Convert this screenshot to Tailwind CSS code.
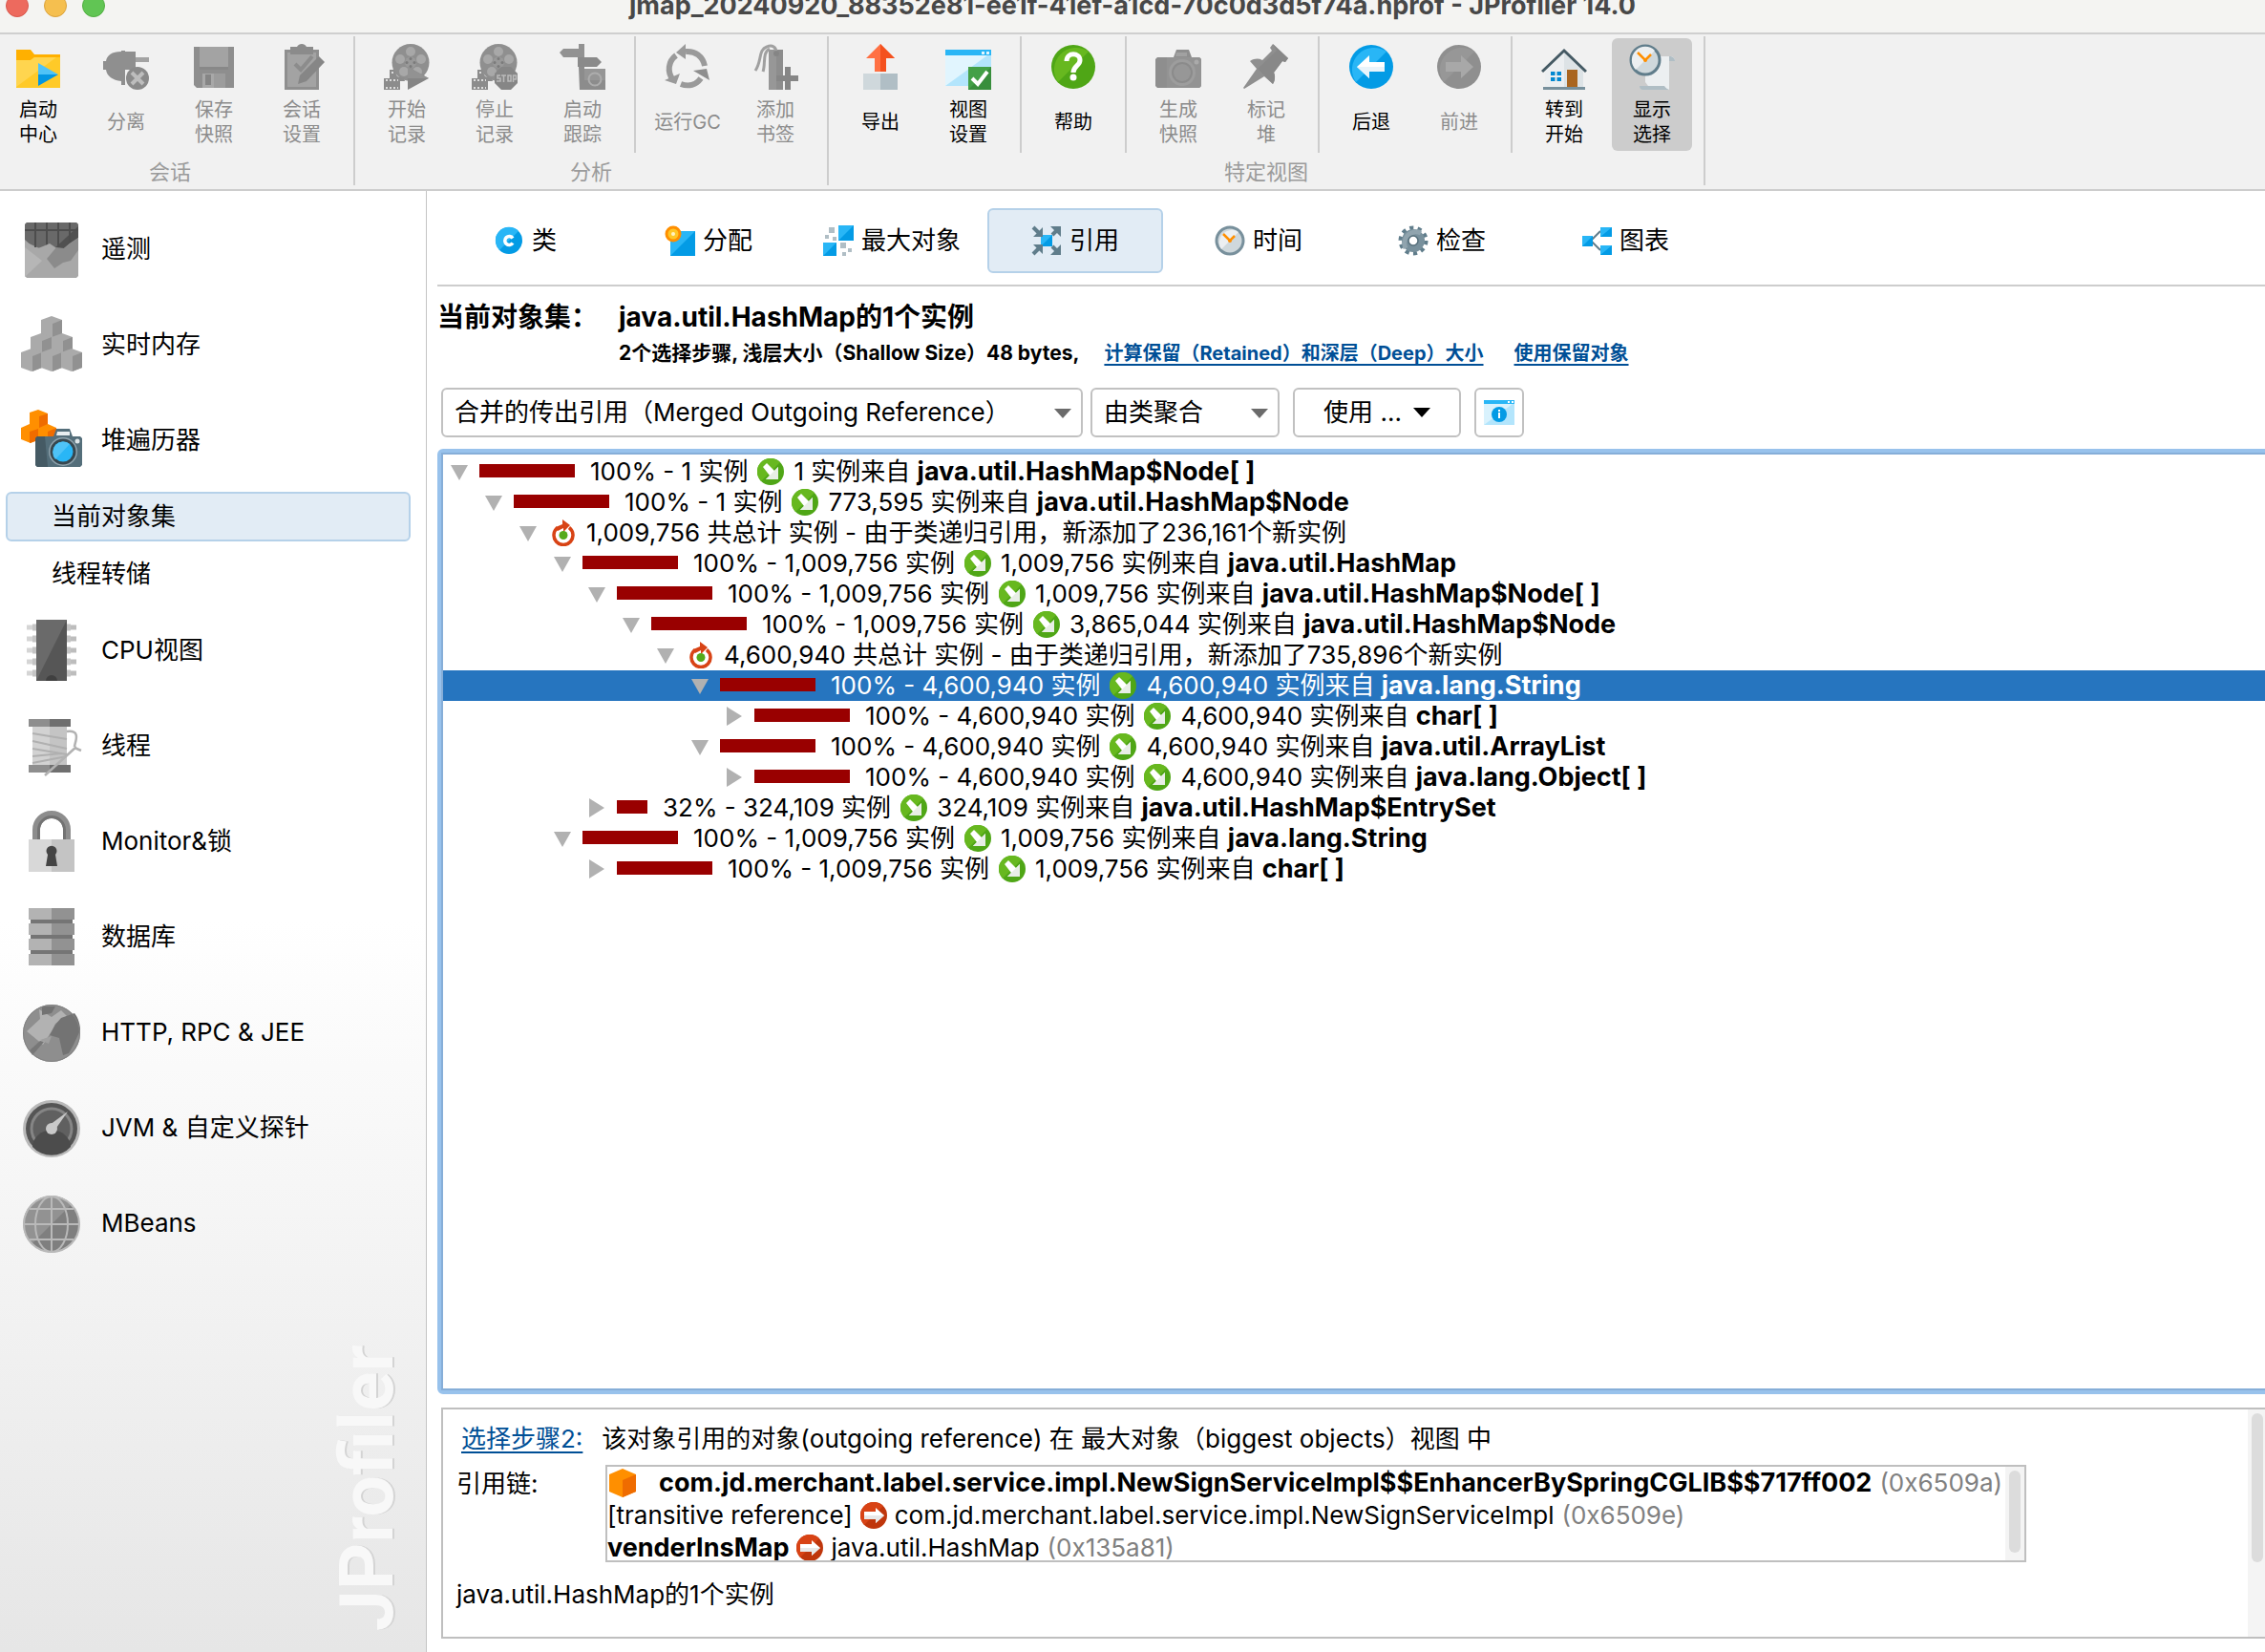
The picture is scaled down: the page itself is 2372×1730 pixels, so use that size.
<!DOCTYPE html>
<html lang="zh-CN">
<head>
<meta charset="utf-8">
<meta name="viewport" content="width=device-width, initial-scale=1">
<title>JProfiler 14.0</title>
<script src="https://cdn.jsdelivr.net/npm/@tailwindcss/browser@4"></script>
</head>
<body class="flex h-screen flex-col overflow-hidden bg-white font-['Inter','Noto_Sans_CJK_SC',sans-serif] text-[26px] leading-8 text-black">

<!-- icon library -->
<svg class="hidden" aria-hidden="true">
  <symbol id="i-start" viewBox="0 0 48 48"><path d="M1 6h15l4 5h27v7H1z" fill="#ffb000"/><path d="M1 17h15l4-3h27v32H1z" fill="#ffca28"/><path d="M1 17h15l4-3h23L1 45z" fill="#ffd54f"/><path d="M24 20l21 12H24z" fill="#4fc3f7"/><path d="M24 44l21-12H24z" fill="#0396e2"/></symbol>
  <symbol id="i-detach" viewBox="0 0 48 48"><path d="M0 18h3c1-6 6-10 16-10V7h4v1h11v6h14v5H34v8H23v16h-4v-4C10 38 4 34 3 27H0z" fill="#8f8f8f"/><path d="M34 14h14v5H34z" fill="#a3a3a3"/><circle cx="36" cy="36" r="12" fill="#8a8a8a"/><path d="M30 30l12 12M42 30L30 42" stroke="#bdbdbd" stroke-width="4"/></symbol>
  <symbol id="i-save" viewBox="0 0 48 48"><path d="M3 3h42v43H6l-3-3z" fill="#8e8e8e"/><path d="M9 3h30v21H9z" fill="#a3a3a3"/><path d="M9 24h30v3H9z" fill="#888"/><path d="M12 31h24v15H12z" fill="#a8a8a8"/><path d="M15 32h6v11h-6z" fill="#858585"/><path d="M24 31h12v15H24z" fill="#9c9c9c"/></symbol>
  <symbol id="i-session" viewBox="0 0 48 48"><path d="M6 6h36v42H6z" fill="#8f8f8f"/><path d="M9 9h30v36H9z" fill="#a3a3a3"/><path d="M12 3h7c2-4 8-4 10 0h7v8H12z" fill="#8b8b8b"/><path d="M17 21l6 6 12-14" fill="none" stroke="#8c8c8c" stroke-width="4"/><path d="M20 42l2-9 20-20 6 6-19 20z" fill="#868686"/></symbol>
  <symbol id="i-reel" viewBox="0 0 48 48"><circle cx="28" cy="19.500" r="19.500" fill="#8f8f8f"/><g fill="#a8a8a8"><circle cx="28" cy="8" r="5"/><circle cx="39" cy="16" r="5"/><circle cx="35" cy="29" r="5"/><circle cx="21" cy="29" r="5"/><circle cx="17" cy="16" r="5"/></g><circle cx="28" cy="19.500" r="6" fill="#999"/><g fill="#7b7b7b"><circle cx="28" cy="15.500" r="1.500"/><circle cx="28" cy="23.500" r="1.500"/><circle cx="24" cy="19.500" r="1.500"/><circle cx="32" cy="19.500" r="1.500"/></g><path d="M0 36h6v-9h5l3 7 7 2 1 3h-5v9H0z" fill="#8c8c8c"/><path d="M2 38h13M2 46h13M8 30h4" stroke="#ddd" stroke-width="2" stroke-dasharray="2 2"/></symbol>
  <symbol id="i-record" viewBox="0 0 48 48"><use href="#i-reel"/><path d="M25 24l22 12-22 12z" fill="#858585"/><path d="M25 24l22 12H25z" fill="#929292"/></symbol>
  <symbol id="i-stop" viewBox="0 0 48 48"><use href="#i-reel"/><path d="M31 24h10l7 7v10l-7 7H31l-7-7V31z" fill="#868686"/><g fill="none" stroke="#bbb" stroke-width="1.500"><path d="M30 33h-3v3h3v3h-4M31 33h5M33.500 33v7M41 33h-3v6h3zM43.500 40v-7h3v4h-3"/></g></symbol>
  <symbol id="i-trace" viewBox="0 0 48 48"><path d="M0 9l4-4h16V0h6v14H4z" fill="#929292"/><path d="M19 14h20l5 5-5 5H19z" fill="#8a8a8a"/><path d="M20 24h6v2h22v22H21z" fill="#8c8c8c"/><path d="M26 26h22v12H26z" fill="#969696"/><circle cx="37" cy="37" r="6.500" fill="none" stroke="#adadad" stroke-width="2"/></symbol>
  <symbol id="i-gc" viewBox="0 0 48 48"><g fill="none" stroke="#9a9a9a" stroke-width="6"><path d="M22 8c10-1 18 5 20 15"/><path d="M9 38C2 29 4 18 12 12"/><path d="M38 36c-5 7-13 9-21 6"/></g><path d="M22 0v16l-10-7z" fill="#9a9a9a"/><path d="M0 38l16-7-4 11z" fill="#9a9a9a"/><path d="M30 28l14-2 3 12z" fill="#8e8e8e"/></symbol>
  <symbol id="i-bookmark" viewBox="0 0 48 48"><path d="M17 6h15v42H17z" fill="#979797"/><path d="M25 6h7v42h-7z" fill="#8d8d8d"/><path d="M3 28C10 18 6 6 15 3c6-3 10 1 10 6M11 29c3-8-1-20 7-24" fill="none" stroke="#a0a0a0" stroke-width="3"/><circle cx="25" cy="10" r="3" fill="#858585"/><path d="M34 24h6v9h8v6h-8v9h-6v-9h-9v-6h9z" fill="#868686"/></symbol>
  <symbol id="i-export" viewBox="0 0 48 48"><path d="M24 0l15 15h-9v14H18V15H9z" fill="#ff7043"/><path d="M24 0l15 15h-9v14h-6z" fill="#f4511e"/><path d="M6 31h18v17H6z" fill="#cfd8dc"/><path d="M24 31h18v17H24z" fill="#b0bec5"/></symbol>
  <symbol id="i-view" viewBox="0 0 48 48"><path d="M0 6h48v6H0z" fill="#29b6f6"/><path d="M0 12h48v32H0z" fill="#b3e5fc"/><path d="M0 12h44L0 44z" fill="#e1f5fe"/><path d="M38 8h3v3h-3zM43 8h3v3h-3z" fill="#e1f5fe"/><path d="M24 24h24v24H24z" fill="#388e3c"/><path d="M24 24h24L24 48z" fill="#43a047"/><path d="M28 36l6 6 10-13" fill="none" stroke="#fff" stroke-width="4"/></symbol>
  <symbol id="i-help" viewBox="0 0 48 48"><circle cx="24" cy="24" r="23" fill="#4fa616"/><path d="M8 40A23 23 0 0 1 40 8z" fill="#67b81f"/><path d="M17 18c0-10 14-9 14-1 0 6-7 6-7 13" fill="none" stroke="#fff" stroke-width="5"/><circle cx="24" cy="35" r="3.500" fill="#fff"/></symbol>
  <symbol id="i-camera" viewBox="0 0 48 48"><path d="M2 14h17l3-8h13l3 8h8l2 2v28l-2 2H2l-2-2V16z" fill="#8e8e8e"/><path d="M12 14h34l2 2v28l-2 2H12z" fill="#939393"/><path d="M22 9h11v4H21z" fill="#a1a1a1"/><circle cx="28" cy="30" r="14" fill="#9d9d9d"/><circle cx="28" cy="30" r="11" fill="#8b8b8b"/><circle cx="28" cy="30" r="9" fill="#979797"/><circle cx="43" cy="19" r="2.500" fill="#aaa"/></symbol>
  <symbol id="i-pin" viewBox="0 0 48 48"><path d="M31 0l16 15-3 4-3-1-9 12c2 4 1 9-1 12l-9-8L1 47 0 46l14-20-7-8c5-3 9-3 13-1l10-10-2-3z" fill="#8f8f8f"/><path d="M31 0l16 15-3 4-3-1-9 12c2 4 1 9-1 12L15 26 35 7z" fill="#888"/></symbol>
  <symbol id="i-back" viewBox="0 0 48 48"><circle cx="24" cy="24" r="23" fill="#039be5"/><path d="M8 40A23 23 0 0 1 40 8z" fill="#29b6f6"/><path d="M9 24l13-12v7h16v10H22v7z" fill="#fff"/><path d="M22 24h16v5H22v7L9 24z" fill="#e9f4fb"/></symbol>
  <symbol id="i-forward" viewBox="0 0 48 48"><circle cx="24" cy="24" r="23" fill="#8f8f8f"/><path d="M8 40A23 23 0 0 1 40 8z" fill="#979797"/><path d="M39 24L26 12v7H10v10h16v7z" fill="#a8a8a8"/></symbol>
  <symbol id="i-home" viewBox="0 0 48 48"><path d="M4 28L24 8l20 20v18H4z" fill="#eceff1"/><path d="M24 8l20 20v18H24z" fill="#dde3e6"/><path d="M1 29L24 7l23 22" fill="none" stroke="#455a64" stroke-width="3"/><path d="M2 45h44v3H2z" fill="#78909c"/><path d="M27 27h11v18H27z" fill="#a9651f"/><path d="M10 29h11v10H10z" fill="#0288d1"/><path d="M15.500 28v12M9 34h13" stroke="#eee" stroke-width="2"/></symbol>
  <symbol id="i-showsel" viewBox="0 0 48 48"><path d="M17 13h26c3 0 5 2 5 5h-6v30H23l-6-8z" fill="#eceff1"/><path d="M42 13c4 0 6 2 6 5h-6zM11 44h26c1 2 3 3 5 4H15c-3 0-4-2-4-4z" fill="#b0bec5"/><circle cx="17" cy="17" r="15" fill="#cfd8dc" stroke="#607d8b" stroke-width="3"/><path d="M7 27A14 14 0 0 1 27 7z" fill="#eceff1"/><path d="M9 9l8 8 6-6" fill="none" stroke="#ff8f00" stroke-width="2.500"/><circle cx="17" cy="17" r="2" fill="#ff8f00"/></symbol>

  <symbol id="s-telemetry" viewBox="0 0 64 64"><path d="M4 6l2-2h52l2 2v54l-2 2H6l-2-2z" fill="#a8a8a8"/><path d="M4 6l2-2h52l2 2v18L30 36 4 24z" fill="#696969"/><path d="M60 8v24H34z" fill="#505050"/><path d="M4 12h56M15 4v26M27 4v26M39 4v26M51 4v26" stroke="#4d4d4d" stroke-width="2"/><path d="M4 22l11 10 8-3 7-3 9 6 6-1 6-5 9-6v40L4 60z" fill="#a8a8a8"/><path d="M27 42l10-12 8 1 6-5 9-6v13l-8 11-8 2-9 6z" fill="#8b8b8b"/><path d="M4 30l18 14L4 61z" fill="#b6b6b6"/></symbol>
  <symbol id="s-cube" viewBox="0 0 22 24"><path d="M0 4l11-4 11 4v16l-11 4-11-4z" fill="#aaa"/><path d="M12 8l10-4v16l-10 4z" fill="#919191"/></symbol>
  <symbol id="s-memory" viewBox="0 0 64 64"><use href="#s-cube" x="21" y="2" width="22" height="24"/><use href="#s-cube" x="10" y="20" width="22" height="24"/><use href="#s-cube" x="32" y="20" width="22" height="24"/><use href="#s-cube" x="0" y="36" width="22" height="24"/><use href="#s-cube" x="21" y="36" width="22" height="24"/><use href="#s-cube" x="42" y="36" width="22" height="24"/></symbol>
  <symbol id="s-heap" viewBox="0 0 64 64"><path d="M9 3l9-3 10 4v11l9 4v12l-9 3-9-3-9 4-10-4V19l9-4z" fill="#ff8f00"/><path d="M19 7l9-3v11l-9 4zM9 23l9-3v12l-9 3zM28 23l9-4v12l-9 3z" fill="#ef6c00"/><path d="M17 28h17l3-8h14l3 8h8l2 2v28l-2 2H17l-2-2V30z" fill="#546e7a"/><path d="M15 30l2-2h8l3 32H17l-2-2z" fill="#455a64"/><path d="M38 23h13v4H37z" fill="#e8eef0"/><circle cx="44" cy="44" r="15" fill="#90a4ae"/><circle cx="44" cy="44" r="13.500" fill="#37474f"/><circle cx="44" cy="44" r="10.500" fill="#29b6f6"/><path d="M36 52a11 11 0 0 1 15-16z" fill="#4fc3f7"/><circle cx="59" cy="33" r="2.500" fill="#dfe6e9"/></symbol>
  <symbol id="s-cpu" viewBox="0 0 64 64"><path d="M6 8h8M6 20h8M6 32h8M6 44h8M6 56h8" stroke="#d5d5d5" stroke-width="5"/><path d="M50 8h8M50 20h8M50 32h8M50 44h8M50 56h8" stroke="#bdbdbd" stroke-width="5"/><path d="M12 8h40M12 20h40M12 32h40M12 44h40M12 56h40" stroke="#c4c4c4" stroke-width="7"/><path d="M16 0h32v64H16z" fill="#565656"/><path d="M16 0h32L18 60l-2 4z" fill="#6a6a6a"/><path d="M26 64a6 6 0 0 1 12 0z" fill="#404040"/></symbol>
  <symbol id="s-thread" viewBox="0 0 64 64"><path d="M12 11h36v42H12z" fill="#c4c4c4"/><path d="M12 11h18v42H12z" fill="#d2d2d2"/><path d="M12 19l36 6M12 27l36 8M12 35l36 6M12 50l36-7M12 43l30-3" stroke="#b0b0b0" stroke-width="2"/><path d="M8 4h44v8H8zM8 52h44v8H8z" fill="#8e8e8e"/><path d="M30 4h22v8H30zM30 52h22v8H30z" fill="#6f6f6f"/><path d="M48 17c16-2 8 12 8 16M25 63l33-30M56 34l7 3" fill="none" stroke="#b2b2b2" stroke-width="2.500"/></symbol>
  <symbol id="s-lock" viewBox="0 0 64 64"><path d="M16 32V20a16 16 0 0 1 32 0v12" fill="none" stroke="#8d8d8d" stroke-width="8"/><path d="M18.500 32V20a13.500 13.500 0 0 1 27 0v12" fill="none" stroke="#737373" stroke-width="3"/><path d="M8 30h48v34H8z" fill="#c4c4c4"/><path d="M8 30h24v34H8z" fill="#d8d8d8"/><path d="M28 46a5.500 5.500 0 1 1 8 0l2 12H26z" fill="#454545"/></symbol>
  <symbol id="s-db" viewBox="0 0 64 64"><path d="M10 4h44v58H10z" fill="#757575"/><g fill="#b3b3b3"><path d="M8 2h24v12H8zM8 18h24v12H8zM8 34h24v12H8zM8 50h24v12H8z"/></g><g fill="#929292"><path d="M32 2h24v12H32zM32 18h24v12H32zM32 34h24v12H32zM32 50h24v12H32z"/></g></symbol>
  <symbol id="s-globe" viewBox="0 0 64 64"><circle cx="32" cy="33" r="30" fill="#8e8e8e"/><path d="M6 31l14-13-1-10 13 8 10-7 6 6-12 8-4 8-9 14z" fill="#b2b2b2"/><path d="M22 5l14 0-4 7-10 2zM36 24l6-7 14-5c4 5 6 12 6 18l-7 15-5 9-6 2-4-18-10-3z" fill="#737373"/><path d="M24 42l-12 14-3-5 11-10z" fill="#777"/><path d="M32 36l-3 8-9-4z" fill="#a0a0a0"/><circle cx="32" cy="33" r="29.500" fill="none" stroke="#828282"/></symbol>
  <symbol id="s-gauge" viewBox="0 0 64 64"><circle cx="32" cy="33" r="30" fill="#b9b9b9"/><circle cx="32" cy="33" r="27" fill="#555"/><circle cx="32" cy="33" r="21" fill="#606060" stroke="#858585" stroke-width="3"/><path d="M12 52a16 14 0 0 1 40 0 27 27 0 0 1-40 0z" fill="#4c4c4c"/><path d="M30 29l19-14-14 20z" fill="#c9c9c9"/><circle cx="32" cy="33" r="6" fill="#c9c9c9"/></symbol>
  <symbol id="s-mbeans" viewBox="0 0 64 64"><circle cx="32" cy="33" r="29.500" fill="#7f7f7f"/><path d="M11 54A29.500 29.500 0 0 1 53 12z" fill="#929292"/><g fill="none" stroke="#b9b9b9" stroke-width="2"><circle cx="32" cy="33" r="29"/><ellipse cx="32" cy="33" rx="17" ry="29"/><path d="M32 4v58M3 33h58M9 17h46M9 49h46"/></g></symbol>

  <symbol id="t-class" viewBox="0 0 32 32"><circle cx="16" cy="16" r="14" fill="#039be5"/><path d="M6 26A14 14 0 0 1 26 6z" fill="#29b6f6"/><path d="M20 13.500a4.500 4.500 0 1 0 0 5" fill="none" stroke="#fff" stroke-width="3.500"/></symbol>
  <symbol id="t-alloc" viewBox="0 0 32 32"><path d="M6 6h26v26H6z" fill="#039be5"/><path d="M6 6h26L6 32z" fill="#29b6f6"/><circle cx="9" cy="9" r="8.500" fill="#ff8f00"/><circle cx="9" cy="9" r="5.500" fill="#ffc727"/><circle cx="9" cy="9" r="2" fill="#fff3c4"/></symbol>
  <symbol id="t-big" viewBox="0 0 32 32"><path d="M16 0h16v16H16zM0 18h14v14H0z" fill="#039be5"/><path d="M16 0h16L16 16zM0 18h14L0 32z" fill="#29b6f6"/><path d="M6 2h6v6H6zM2 10h4v4H2zM10 12h4v4h-4zM18 18h6v6h-6zM26 24h4v4h-4zM20 28h4v4h-4z" fill="#b0bec5"/></symbol>
  <symbol id="t-refs" viewBox="0 0 32 32"><path d="M10 10h12v12H10z" fill="#039be5"/><path d="M10 10h12L10 22z" fill="#29b6f6"/><g stroke="#607d8b" stroke-width="4"><path d="M2 2l7 7M2 30l7-7M22 10l7-7M22 22l7 7"/></g><path d="M12 2v10H2zM12 30V20H2zM20 1h11v11zM20 31h11V20z" fill="#607d8b"/></symbol>
  <symbol id="t-time" viewBox="0 0 32 32"><circle cx="16" cy="16" r="14" fill="#cfd8dc" stroke="#78909c" stroke-width="3"/><path d="M7 25A13 13 0 0 1 25 7z" fill="#eceff1"/><path d="M9 9l7 7 5-5" fill="none" stroke="#ff8f00" stroke-width="2.500"/><circle cx="16" cy="16" r="2" fill="#ff8f00"/></symbol>
  <symbol id="t-gear" viewBox="0 0 32 32"><circle cx="16" cy="16" r="13" fill="none" stroke="#607d8b" stroke-width="5" stroke-dasharray="4 4.170"/><circle cx="16" cy="16" r="8.500" fill="none" stroke="#78909c" stroke-width="7"/><path d="M8 24A12 12 0 0 1 24 8" fill="none" stroke="#90a4ae" stroke-width="5"/><circle cx="16" cy="16" r="5" fill="#fff" stroke="#546e7a" stroke-width="1.500"/></symbol>
  <symbol id="t-graph" viewBox="0 0 32 32"><path d="M20 6l-10 10 10 10" fill="none" stroke="#607d8b" stroke-width="2"/><path d="M1 11h11v11H1zM20 2h12v10H20zM20 21h12v10H20z" fill="#039be5"/><path d="M1 11h11L1 22zM20 2h12L20 12zM20 21h12L20 31z" fill="#29b6f6"/></symbol>
  <symbol id="t-info" viewBox="0 0 32 26"><path d="M0 0h32v4H0z" fill="#29b6f6"/><path d="M0 4h32v22H0z" fill="#b3e5fc"/><path d="M0 4h30L0 26z" fill="#d9f2fd"/><path d="M25 1h2v2h-2zM29 1h2v2h-2z" fill="#fff"/><circle cx="16" cy="15" r="8" fill="#039be5"/><path d="M16 13v6M16 10v2" stroke="#fff" stroke-width="2"/></symbol>
  <symbol id="g-out" viewBox="0 0 28 28"><circle cx="14" cy="14" r="14" fill="#4fa616"/><path d="M4 24A14 14 0 0 1 24 4z" fill="#67b81f"/><path d="M6 9l4-4 8 8 4-4v13H9l4-4z" fill="#fff"/><path d="M22 9v13H9z" fill="#e8eee6"/></symbol>
  <symbol id="g-rec" viewBox="0 0 24 28"><path d="M6 8.500a10 10 0 1 0 12 0" fill="none" stroke="#d84315" stroke-width="3.500"/><path d="M11 0l8 6-7 7v-4l-6 3-2-4 7-3z" fill="#d84315"/><circle cx="12" cy="16.500" r="4.500" fill="#55aa1b"/></symbol>
  <symbol id="g-ref" viewBox="0 0 28 28"><circle cx="14" cy="14" r="14" fill="#bf360c"/><path d="M4 24A14 14 0 0 1 24 4z" fill="#d84315"/><path d="M25 14l-9-8v4H4v8h12v4z" fill="#fff"/><path d="M25 14H4v4h12v4z" fill="#e8e8e8"/></symbol>
  <symbol id="g-obj" viewBox="0 0 28 30"><path d="M14 0l14 6v18l-14 6L0 24V6z" fill="#ff8f00"/><path d="M14 12l14-6v18l-14 6z" fill="#ef6c00"/></symbol>
</svg>

<!-- window title bar -->
<header class="shrink-0 overflow-hidden border-b-2 border-[#cfcfcf] bg-[#f4f4f2]">
  <div class="-mt-[22px] grid h-14 grid-cols-[1fr_auto_1fr] items-center px-1.5">
    <div class="flex gap-4">
      <button aria-label="关闭" class="size-6 rounded-full border border-[#d8584d] bg-[#ed6a5e]"></button>
      <button aria-label="最小化" class="size-6 rounded-full border border-[#dba23c] bg-[#f5bf4f]"></button>
      <button aria-label="缩放" class="size-6 rounded-full border border-[#51ae41] bg-[#61c554]"></button>
    </div>
    <h1 class="text-[27px] font-bold whitespace-nowrap text-[#484848]">jmap_20240920_88352e81-ee1f-41ef-a1cd-70c0d3d5f74a.hprof - JProfiler 14.0</h1>
  </div>
</header>

<!-- toolbar -->
<div id="toolbar" role="toolbar" class="flex h-[164px] shrink-0 overflow-hidden border-b-2 border-[#cdcdcd] bg-[#f1f1f1] pt-0.5 pb-1"></div>

<div class="flex min-h-0 flex-1">
  <!-- views -->
  <aside class="flex w-[447px] shrink-0 flex-col border-r border-[#c4c4c4] bg-linear-to-b from-white from-50% to-[#e6e6e6] pt-[11px]">
    <nav id="views" class="flex flex-col"></nav>
    <div class="flex min-h-0 flex-1 items-end justify-end pr-3.5 pb-[22px]">
      <div class="rotate-180 font-['Roboto',sans-serif] text-[77px] leading-[94px] font-bold text-[#f8f8f8] [writing-mode:vertical-rl] text-shadow-[0_2px_0_#d4d4d4]">JProfiler</div>
    </div>
  </aside>

  <main class="flex min-w-0 flex-1 flex-col overflow-hidden pl-[11px]">
    <nav id="tabs" class="flex h-[100px] shrink-0 gap-2 border-b-2 border-[#cdcdcd] pt-[18px]"></nav>

    <section class="grid shrink-0 grid-cols-[190px_1fr] pt-3 font-bold">
      <h2 class="text-[28px] leading-10 whitespace-nowrap">当前对象集：</h2>
      <div>
        <p class="text-[28px] leading-10">java.util.HashMap的1个实例</p>
        <p class="flex gap-[26px] text-[20px] leading-9 whitespace-nowrap">
          <span class="text-[21px]">2个选择步骤, 浅层大小（Shallow Size）48 bytes,</span>
          <span class="flex gap-8">
            <a href="#" class="text-[#004f96] underline decoration-2 underline-offset-4">计算保留（Retained）和深层（Deep）大小</a>
            <a href="#" class="text-[#004f96] underline decoration-2 underline-offset-4">使用保留对象</a>
          </span>
        </p>
      </div>
    </section>

    <div class="flex shrink-0 gap-2 pt-[18px] pb-3 pl-1">
      <div class="relative">
        <select aria-label="引用类型" class="h-[52px] w-[672px] appearance-none rounded-md border-2 border-[#c1c1c1] bg-white pl-3"><option>合并的传出引用（Merged Outgoing Reference）</option></select>
        <svg class="pointer-events-none absolute top-[22px] right-3 h-2.5 w-[18px]" viewBox="0 0 18 10"><path d="M0 0h18l-9 10z" fill="#6b6b6b"/></svg>
      </div>
      <div class="relative">
        <select aria-label="聚合方式" class="h-[52px] w-[198px] appearance-none rounded-md border-2 border-[#c1c1c1] bg-white pl-3"><option>由类聚合</option></select>
        <svg class="pointer-events-none absolute top-[22px] right-3 h-2.5 w-[18px]" viewBox="0 0 18 10"><path d="M0 0h18l-9 10z" fill="#6b6b6b"/></svg>
      </div>
      <div class="flex gap-3.5 pl-1.5">
        <button class="flex h-[52px] w-[176px] items-center justify-center gap-3 rounded-md border-2 border-[#c1c1c1] bg-white">使用 ...<svg class="h-2.5 w-[18px]" viewBox="0 0 18 10"><path d="M0 0h18l-9 10z"/></svg></button>
        <button aria-label="信息" class="flex h-[52px] w-[52px] items-center justify-center rounded-md border-2 border-[#c1c1c1] bg-white"><svg class="h-[26px] w-8"><use href="#t-info"/></svg></button>
      </div>
    </div>

    <!-- reference tree -->
    <div class="-mr-2 flex min-h-0 flex-1 rounded-md border-4 border-[#98c2ec] bg-[#98c2ec]">
      <ul id="tree" role="tree" class="w-full overflow-hidden border-2 border-[#86aed8] bg-white pt-0.5"></ul>
    </div>

    <!-- selection steps -->
    <section class="mt-3.5 mb-3.5 ml-1 flex h-[242px] shrink-0 border-2 border-r-0 border-[#bfbfbf]">
      <div class="min-w-0 flex-1 pt-[15px] pl-3.5">
        <p class="flex gap-5 pl-[5px] whitespace-nowrap"><a href="#" class="text-[#004f96] underline decoration-2 underline-offset-4">选择步骤2:</a><span>该对象引用的对象(outgoing reference) 在 最大对象（biggest objects）视图 中</span></p>
        <div class="flex pt-[11px]">
          <span class="w-[156px] shrink-0 pt-1">引用链:</span>
          <div class="flex h-[102px] w-[1488px] overflow-hidden border-2 border-[#bfbfbf]">
            <div class="min-w-0 flex-1 leading-[34px] whitespace-nowrap">
              <p class="flex items-center pl-0.5"><svg class="mr-6 h-[30px] w-7"><use href="#g-obj"/></svg><b class="text-[27px]">com.jd.merchant.label.service.impl.NewSignServiceImpl$$EnhancerBySpringCGLIB$$717ff002</b><span class="pl-2 text-[#808080]">(0x6509a)</span></p>
              <p class="flex items-center">[transitive reference]<svg class="mx-2 size-7"><use href="#g-ref"/></svg>com.jd.merchant.label.service.impl.NewSignServiceImpl<span class="pl-2 text-[#808080]">(0x6509e)</span></p>
              <p class="flex items-center"><b class="text-[27px]">venderInsMap</b><svg class="mx-2 size-7"><use href="#g-ref"/></svg>java.util.HashMap<span class="pl-2 text-[#808080]">(0x135a81)</span></p>
            </div>
            <div class="w-5 shrink-0 bg-[#f4f4f4] px-1 pt-1"><div class="h-[86px] rounded-full bg-[#dcdcdc]"></div></div>
          </div>
        </div>
        <p class="pt-[18px]">java.util.HashMap的1个实例</p>
      </div>
      <div class="w-[18px] bg-[#f4f4f4] pt-1 pr-0.5 pl-1"><div class="h-[156px] rounded-full bg-[#dcdcdc]"></div></div>
    </section>
  </main>
</div>

<script>
  const icon = (id, cls) => `<svg class="${cls}"><use href="#${id}"/></svg>`;

  // Toolbar: sections hold groups, groups hold [icon, label lines, state]
  const sections = [
    ['会话', [[['i-start', '启动<br>中心', 'on'], ['i-detach', '分离'], ['i-save', '保存<br>快照'], ['i-session', '会话<br>设置']]]],
    ['分析', [[['i-record', '开始<br>记录'], ['i-stop', '停止<br>记录'], ['i-trace', '启动<br>跟踪']], [['i-gc', '运行GC'], ['i-bookmark', '添加<br>书签']]]],
    ['特定视图', [[['i-export', '导出', 'on'], ['i-view', '视图<br>设置', 'on']], [['i-help', '帮助', 'on']], [['i-camera', '生成<br>快照'], ['i-pin', '标记<br>堆']], [['i-back', '后退', 'on'], ['i-forward', '前进']], [['i-home', '转到<br>开始', 'on'], ['i-showsel', '显示<br>选择', 'active']]]],
  ];
  const toolStates = { on: 'text-black', active: 'text-black bg-[#cccccc]' };
  document.getElementById('toolbar').innerHTML = sections.map(([name, groups], s) => `
    <div class="flex shrink-0 flex-col border-r-2 border-[#cdcdcd] ${s ? '' : '-ml-3.5'}">
      <div class="flex h-[122px]">${groups.map((g, i) => `
        <div class="flex gap-2 px-3 pt-0.5 pb-0.5 ${i < groups.length - 1 ? 'border-r-2 border-[#cdcdcd]' : ''}">${g.map(([ic, label, st]) => `
          <button class="flex h-[118px] w-[84px] flex-col items-center rounded-md pt-1.5 ${toolStates[st] || 'text-[#8c8c8c]'}" ${st ? '' : 'disabled'}>
            ${icon(ic, 'size-12 shrink-0')}
            <span class="flex flex-1 items-center pt-1 text-[20px] leading-[26px] whitespace-nowrap">${label}</span>
          </button>`).join('')}
        </div>`).join('')}
      </div>
      <div class="pt-1 text-center text-[22px] text-[#9b9b9b]">${name}</div>
    </div>`).join('');

  // Sidebar
  const views = [
    ['s-telemetry', '遥测'], ['s-memory', '实时内存'], ['s-heap', '堆遍历器'],
    [null, '当前对象集', true], [null, '线程转储'],
    ['s-cpu', 'CPU视图'], ['s-thread', '线程'], ['s-lock', 'Monitor&amp;锁'], ['s-db', '数据库'],
    ['s-globe', 'HTTP, RPC &amp; JEE'], ['s-gauge', 'JVM &amp; 自定义探针'], ['s-mbeans', 'MBeans'],
  ];
  document.getElementById('views').innerHTML = views.map(([ic, label, sel]) => ic
    ? `<a href="#" class="flex h-[100px] items-center gap-5 pl-[22px]">${icon(ic, 'size-16')}${label}</a>`
    : `<a href="#" class="my-1 mr-4 ml-1.5 flex h-[52px] items-center rounded-md border-2 pl-[46px] ${sel ? 'border-[#b5d1e9] bg-[#e2ecf5]' : 'border-transparent'}">${label}</a>`).join('');

  // Heap walker tabs
  const tabs = [['t-class', '类'], ['t-alloc', '分配'], ['t-big', '最大对象'], ['t-refs', '引用', true], ['t-time', '时间'], ['t-gear', '检查'], ['t-graph', '图表']];
  document.getElementById('tabs').innerHTML = tabs.map(([ic, label, sel]) =>
    `<button class="flex h-[68px] w-[184px] items-center justify-center gap-2 rounded-md border-2 ${sel ? 'border-[#b5d1e9] bg-[#e2ecf5]' : 'border-transparent'}">${icon(ic, 'size-8')}${label}</button>`).join('');

  // Tree rows: [level, open, percent or null, count, target count, class or note, selected]
  const rows = [
    [0, 1, 100, '1', '1', 'java.util.HashMap$Node[ ]'],
    [1, 1, 100, '1', '773,595', 'java.util.HashMap$Node'],
    [2, 1, null, '1,009,756', '236,161'],
    [3, 1, 100, '1,009,756', '1,009,756', 'java.util.HashMap'],
    [4, 1, 100, '1,009,756', '1,009,756', 'java.util.HashMap$Node[ ]'],
    [5, 1, 100, '1,009,756', '3,865,044', 'java.util.HashMap$Node'],
    [6, 1, null, '4,600,940', '735,896'],
    [7, 1, 100, '4,600,940', '4,600,940', 'java.lang.String', 1],
    [8, 0, 100, '4,600,940', '4,600,940', 'char[ ]'],
    [7, 1, 100, '4,600,940', '4,600,940', 'java.util.ArrayList'],
    [8, 0, 100, '4,600,940', '4,600,940', 'java.lang.Object[ ]'],
    [4, 0, 32, '324,109', '324,109', 'java.util.HashMap$EntrySet'],
    [3, 1, 100, '1,009,756', '1,009,756', 'java.lang.String'],
    [4, 0, 100, '1,009,756', '1,009,756', 'char[ ]'],
  ];
  document.getElementById('tree').innerHTML = rows.map(([lv, open, pct, n, m, cls, sel]) => `
    <li role="treeitem" class="flex h-8 items-center whitespace-pre ${sel ? 'bg-[#2675bf] text-white' : ''}" style="padding-left:${8 + lv * 36}px">
      <svg class="mr-3 h-5 w-[18px] shrink-0" viewBox="0 0 18 20"><path d="${open ? 'M0 3h18L9 19z' : 'M1 0l16 10L1 20z'}" fill="#b1b1b1"/></svg>${pct === null
      ? `${icon('g-rec', 'mr-3 ml-1 h-7 w-6 shrink-0')}<span>${n} 共总计 实例 - 由于类递归引用，新添加了${m}个新实例</span>`
      : `<span class="mr-4 mb-0.5 h-3.5 shrink-0 bg-[#990000]" style="width:${pct}px"></span><span>${pct}% - ${n} 实例</span>${icon('g-out', 'mx-2.5 size-7 shrink-0')}<span>${m} 实例来自 <b class="text-[27px]">${cls}</b></span>`}</li>`).join('');
</script>
</body>
</html>
